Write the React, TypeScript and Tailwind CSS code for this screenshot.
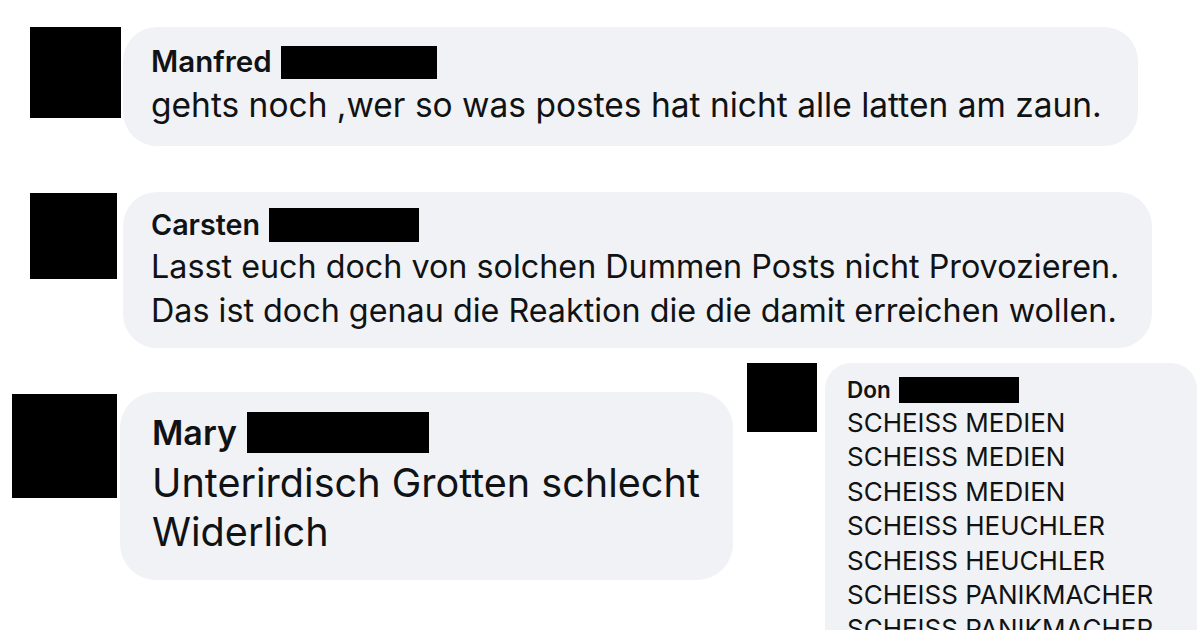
import React from "react";

function App() {
  return (
    <div className="h-[630px] w-[1200px] overflow-hidden bg-white font-[Inter,sans-serif] text-[#111214]">
      {/* Manfred */}
      <div className="flex pl-[30px] pt-[27px]">
        <div className="h-[91px] w-[91px] shrink-0 bg-black" />
        <div className="ml-[2px] h-[119px] w-[1015px] rounded-[34px] bg-[#f0f2f5] pl-[28px] pt-[18px]">
          <div className="flex h-[34px] items-center gap-[9px]">
            <span className="text-[29.5px] font-semibold leading-none">Manfred</span>
            <span className="h-[33px] w-[156px] bg-black" />
          </div>
          <p className="mt-[4px] text-[33.5px] leading-[44px]">
            gehts noch ,wer so was postes hat nicht alle latten am zaun.
          </p>
        </div>
      </div>

      {/* Carsten */}
      <div className="flex pl-[30px] pt-[46px]">
        <div className="mt-[1px] h-[86px] w-[87px] shrink-0 bg-black" />
        <div className="ml-[6px] h-[156px] w-[1029px] rounded-[34px] bg-[#f0f2f5] pl-[28px] pt-[16px]">
          <div className="flex h-[34px] items-center gap-[9px]">
            <span className="text-[28.7px] font-semibold leading-none">Carsten</span>
            <span className="h-[34px] w-[150px] bg-black" />
          </div>
          <p className="mt-[3px] text-[32.3px] leading-[44px]">
            Lasst euch doch von solchen Dummen Posts nicht Provozieren.
            <br />
            Das ist doch genau die Reaktion die die damit erreichen wollen.
          </p>
        </div>
      </div>

      {/* Mary + Don */}
      <div className="flex items-start pl-[12px] pt-[15px]">
        <div className="flex items-start pt-[29px]">
          <div className="mt-[2px] h-[104px] w-[105px] shrink-0 bg-black" />
          <div className="ml-[3px] h-[188px] w-[613px] rounded-[36px] bg-[#f0f2f5] pl-[32px] pt-[20px]">
            <div className="flex h-[41px] items-center gap-[10px]">
              <span className="text-[34px] font-semibold leading-none">Mary</span>
              <span className="h-[41px] w-[182px] bg-black" />
            </div>
            <p className="mt-[6px] text-[39.6px] leading-[49px]">
              Unterirdisch Grotten schlecht
              <br />
              Widerlich
            </p>
          </div>
        </div>

        <div className="ml-[14px] flex items-start">
          <div className="h-[69px] w-[70px] shrink-0 bg-black" />
          <div className="ml-[8px] h-[300px] w-[372px] rounded-[26px] bg-[#f0f2f5] pl-[22px] pt-[14px]">
            <div className="flex h-[26px] items-center gap-[8px]">
              <span className="text-[22.5px] font-semibold leading-none">Don</span>
              <span className="h-[26px] w-[120px] bg-black" />
            </div>
            <p className="mt-[3px] text-[26px] leading-[34.4px]">
              SCHEISS MEDIEN
              <br />
              SCHEISS MEDIEN
              <br />
              SCHEISS MEDIEN
              <br />
              SCHEISS HEUCHLER
              <br />
              SCHEISS HEUCHLER
              <br />
              SCHEISS PANIKMACHER
              <br />
              SCHEISS PANIKMACHER
            </p>
          </div>
        </div>
      </div>
    </div>
  );
}

export default App;
